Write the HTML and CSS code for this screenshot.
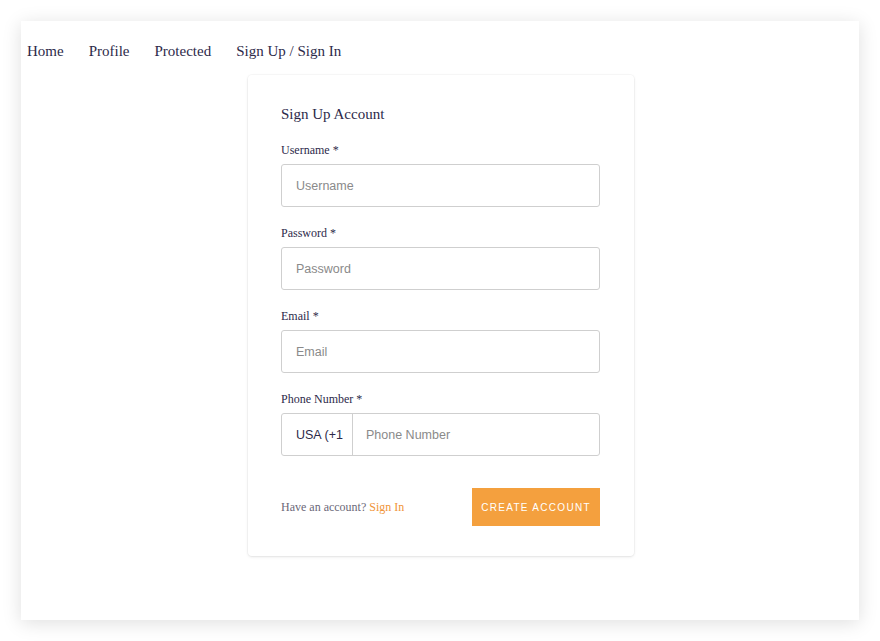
FILE: index.html
```html
<!DOCTYPE html>
<html>
<head>
<meta charset="utf-8">
<link rel="stylesheet" href="styles.css">
</head>
<body>
<div class="frame">
  <nav class="nav">
    <a href="#">Home</a>
    <a href="#">Profile</a>
    <a href="#">Protected</a>
    <a href="#">Sign Up / Sign In</a>
  </nav>
  <div class="card">
    <h2 class="title">Sign Up Account</h2>
    <div class="field">
      <label class="label">Username *</label>
      <input class="input" placeholder="Username">
    </div>
    <div class="field">
      <label class="label">Password *</label>
      <input class="input" placeholder="Password">
    </div>
    <div class="field">
      <label class="label">Email *</label>
      <input class="input" placeholder="Email">
    </div>
    <div class="field">
      <label class="label">Phone Number *</label>
      <div class="phone">
        <div class="country">USA (+1</div>
        <input class="phone-input" placeholder="Phone Number">
      </div>
    </div>
    <div class="footer">
      <span class="have">Have an account? <a href="#" class="signin">Sign In</a></span>
      <button class="btn">CREATE ACCOUNT</button>
    </div>
  </div>
</div>
</body>
</html>
```
FILE: styles.css
```css
html, body { margin: 0; padding: 0; background: #fff; }
body { width: 880px; height: 641px; overflow: hidden; }
.frame {
  margin: 21px;
  width: 838px;
  height: 599px;
  background: #fff;
  box-shadow: 0 3px 18px rgba(0,0,0,0.13);
  box-sizing: border-box;
  padding-top: 21px;
  padding-left: 2px;
}
.nav {
  display: flex;
  gap: 25px;
  padding-left: 4px;
  font-family: "Liberation Serif", serif;
  font-size: 15px;
  line-height: 18px;
}
.nav a { color: #2d2a4a; text-decoration: none; }
.card {
  width: 386px;
  box-sizing: border-box;
  margin: 15px auto 0;
  padding: 31px 34px 30px 33px;
  border-radius: 4px;
  box-shadow: 0 1px 3px rgba(0,0,0,0.1), 0 0 0 1px rgba(0,0,0,0.025);
  font-family: "Liberation Serif", serif;
}
.title {
  margin: 0 0 20px;
  font-weight: normal;
  font-size: 15px;
  line-height: 17px;
  color: #2d2a4a;
}
.field { margin-bottom: 19px; }
.label {
  display: block;
  font-size: 12px;
  line-height: 14px;
  margin-bottom: 7px;
  color: #2d2a4a;
}
.input, .phone {
  display: block;
  width: 100%;
  height: 43px;
  box-sizing: border-box;
  border: 1px solid #cfcfcf;
  border-radius: 3px;
  padding: 0 14px;
  font-family: "Liberation Sans", Arial, sans-serif;
  font-size: 12.5px;
  color: #333;
  outline: none;
}
.input::placeholder, .phone-input::placeholder { color: #8a8a8a; }
.phone { display: flex; padding: 0; }
.country {
  width: 71px;
  box-sizing: border-box;
  border-right: 1px solid #cfcfcf;
  display: flex;
  align-items: center;
  padding-left: 14px;
  color: #2d2a4a;
  white-space: nowrap;
  overflow: hidden;
}
.phone-input {
  flex: 1;
  border: none;
  outline: none;
  padding: 0 13px;
  font-family: "Liberation Sans", Arial, sans-serif;
  font-size: 12.5px;
  background: transparent;
}
.footer {
  display: flex;
  justify-content: space-between;
  align-items: center;
  margin-top: 32px;
}
.have { font-size: 12px; color: #6b6878; }
.signin { color: #f0953a; text-decoration: none; }
.btn {
  width: 128px;
  height: 38px;
  border: none;
  background: #f4a03e;
  color: #fff;
  font-family: "Liberation Sans", Arial, sans-serif;
  font-size: 10px;
  letter-spacing: 1.3px;
  padding: 0;
}
```
